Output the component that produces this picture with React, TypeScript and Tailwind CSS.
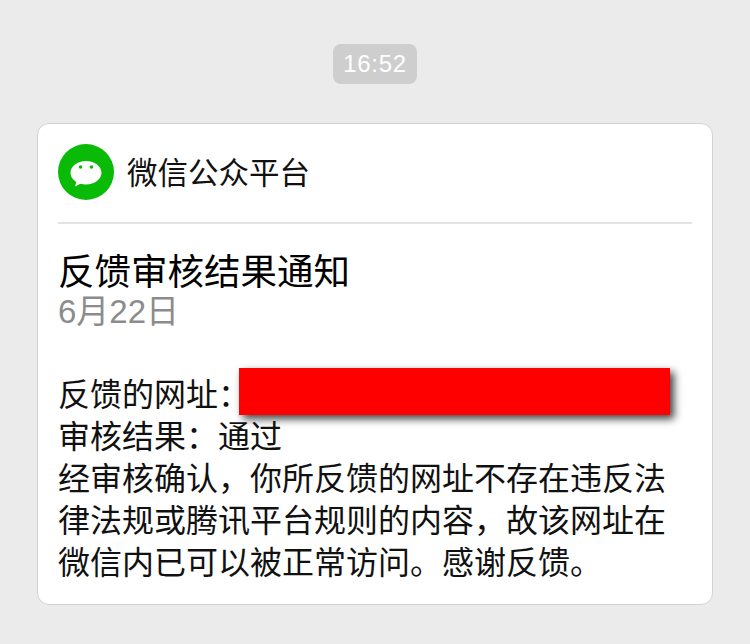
export default function App() {
  return (
    <div
      className="w-[750px] h-[644px] bg-[#ebebeb] flex flex-col items-center pt-11 overflow-hidden"
      style={{ fontFamily: '"Noto Sans CJK SC", sans-serif' }}
    >
      <div className="h-10 w-[84px] rounded-lg bg-[#cecece] text-white text-[24px] tracking-[0.7px] font-light flex items-center justify-center font-['Liberation_Sans',sans-serif]">
        16:52
      </div>

      <div className="mt-[39px] w-[676px] h-[482px] bg-white rounded-xl border border-[#d2d2d2] px-5">
        <div className="h-[100px] pb-[2px] flex items-center gap-[13px] border-b-2 border-[#e3e3e3]">
          <div className="w-14 h-14 rounded-full bg-[#09bb07] flex items-center justify-center">
            <svg width="56" height="56" viewBox="0 0 56 56">
              <path d="M28 17c-8.600 0-15.500 5.300-15.500 11.800 0 3.700 2.200 7 5.700 9.200l-1.200 4.500 5.400-2.800c1.800.5 3.700.8 5.600.8 8.600 0 15.500-5.200 15.500-11.700S36.600 17 28 17z" fill="#fff" />
              <circle cx="22.500" cy="23" r="1.800" fill="#09bb07" />
              <circle cx="33.500" cy="23" r="1.800" fill="#09bb07" />
            </svg>
          </div>
          <span className="text-[30.500px] text-[#111]">微信公众平台</span>
        </div>

        <h1 className="mt-[24px] text-[36.500px] leading-[44px] text-black">反馈审核结果通知</h1>
        <p className="mt-[1px] text-[33px] leading-[38px] text-[#8c8c8c] font-['Liberation_Sans','Noto_Sans_CJK_SC',sans-serif]">6月22日</p>

        <div className="mt-[37px] text-[32px] leading-[42px] text-[#111]">
          <div className="flex items-end">
            <span>反馈的网址：</span>
            <div className="h-[47px] w-[431px] -ml-[11px] -mb-[2px] bg-[#ff0000] shadow-[4px_4px_8px_rgba(0,0,0,0.75)]" />
          </div>
          <p>审核结果：通过</p>
          <p>经审核确认，你所反馈的网址不存在违反法律法规或腾讯平台规则的内容，故该网址在微信内已可以被正常访问。感谢反馈。</p>
        </div>
      </div>
    </div>
  );
}
